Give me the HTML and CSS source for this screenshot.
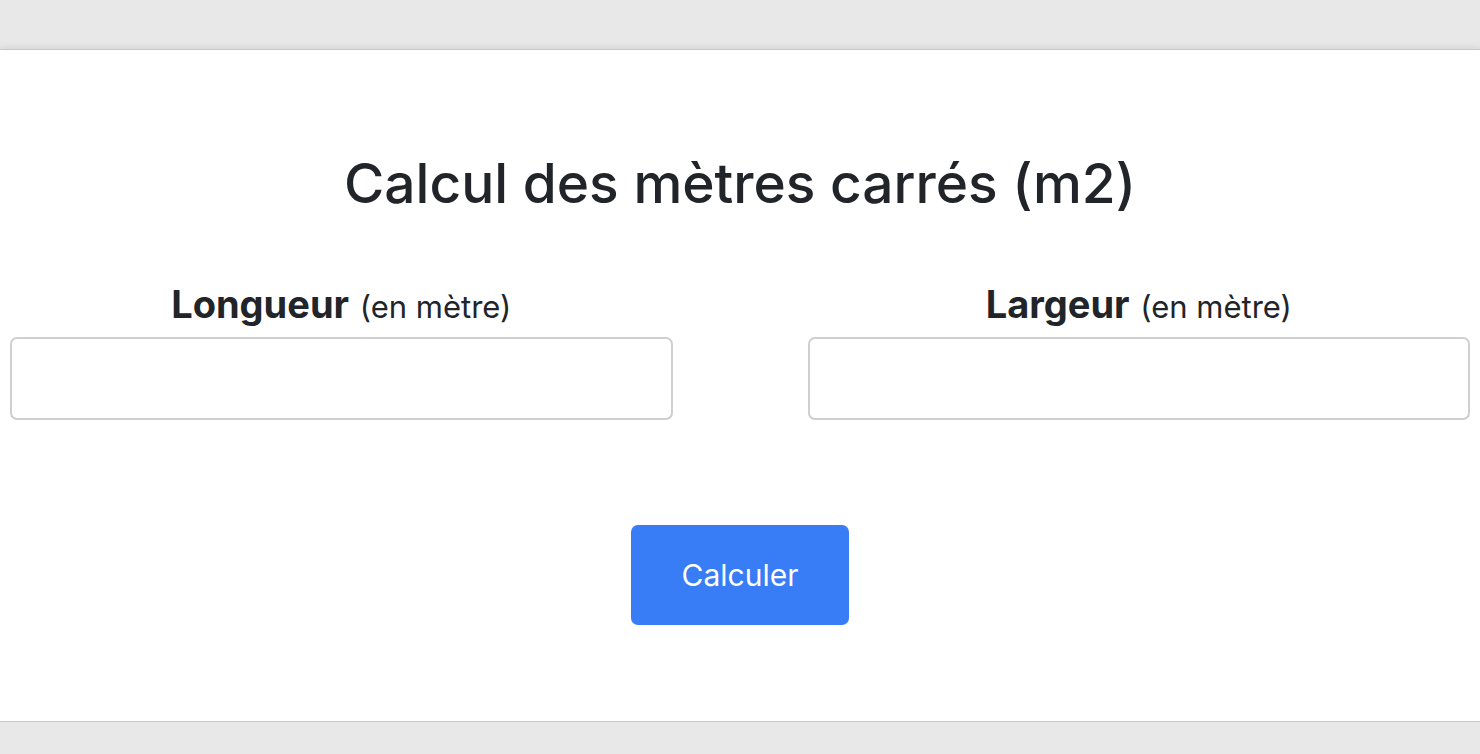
FILE: index.html
```html
<!DOCTYPE html>
<html lang="fr">
  <head>
    <meta charset="UTF-8" />
    <meta name="viewport" content="width=device-width, initial-scale=1.0" />
    <title>Calcul des mètres carrés</title>
    <link rel="stylesheet" href="styles.css">
  </head>
  <body>
    <div class="card">
      <h1>Calcul des mètres carrés (m2)</h1>
      <div class="fields">
        <div class="field">
          <label for="longueur"><strong>Longueur</strong> <small>(en mètre)</small></label>
          <input type="number" id="longueur" />
        </div>
        <div class="field">
          <label for="largeur"><strong>Largeur</strong> <small>(en mètre)</small></label>
          <input type="number" id="largeur" />
        </div>
      </div>
      <button onclick="calculer()">Calculer</button>
    </div>

    <script>
      function calculer() {
        const longueur = parseFloat(document.getElementById("longueur").value);
        const largeur = parseFloat(document.getElementById("largeur").value);
        if (isNaN(longueur) || isNaN(largeur)) return;
        alert(longueur * largeur + " m2");
      }
    </script>
  </body>
</html>
```

FILE: styles.css
```css
body {
  font-family: Inter, "Liberation Sans", Arial, sans-serif;
  background-color: #e8e8e8;
  color: #212529;
  margin: 0;
  padding: 49px 0 0;
}

.card {
  background-color: #fff;
  border-top: 1px solid #c8c8c8;
  border-bottom: 1px solid #c8c8c8;
  box-shadow: 0 0 8px rgba(0, 0, 0, 0.12);
  height: 673px;
  box-sizing: border-box;
  padding: 0 10px;
  display: flex;
  flex-direction: column;
  align-items: center;
}

h1 {
  font-size: 55px;
  font-weight: 500;
  line-height: 1.2;
  margin: 100px 0 0;
  text-align: center;
}

.fields {
  width: 100%;
  display: grid;
  grid-template-columns: 1fr 1fr;
  gap: 135px;
  margin-top: 66px;
}

.field {
  display: flex;
  flex-direction: column;
  align-items: center;
}

.field label {
  font-size: 38px;
  line-height: 1.2;
  margin-bottom: 9px;
}

.field small {
  font-size: 31px;
}

.field input {
  width: 100%;
  height: 83px;
  box-sizing: border-box;
  border: 2px solid #cfcfcf;
  border-radius: 7px;
  font-size: 32px;
  padding: 0 20px;
  font-family: inherit;
}

button {
  margin-top: 105px;
  width: 218px;
  height: 100px;
  border: none;
  border-radius: 7px;
  background-color: #387cf6;
  color: #fff;
  font-family: inherit;
  font-size: 30px;
  cursor: pointer;
}

button:hover {
  background-color: #2f6fe6;
}
```
